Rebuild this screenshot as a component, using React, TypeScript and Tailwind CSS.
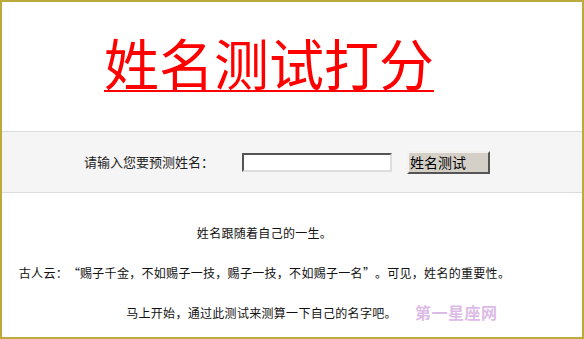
export default function App() {
  return (
    <div
      className="relative flex h-[339px] w-[584px] flex-col border-2 border-[#bcaa3c] bg-white text-[#000]"
      style={{ fontFamily: '"Noto Sans CJK SC", sans-serif' }}
    >
      <div className="flex h-[129px] items-center justify-center pr-[46px] pb-[10px]">
        <a
          href="#"
          className="text-[55px] leading-none text-[#ff0000] underline decoration-2 underline-offset-[5px]"
          style={{ fontFamily: '"Noto Sans CJK SC", serif' }}
        >
          姓名测试打分
        </a>
      </div>

      <div className="flex h-[62px] items-center justify-center border-y border-[#dcdcdc] bg-[#f5f5f5] pr-[10px] text-[13px] text-[#222]">
        <span className="mr-[28px]">请输入您要预测姓名：</span>
        <input
          type="text"
          className="h-[19px] w-[150px] border-2 border-t-[#555] border-l-[#555] border-r-[#ddd] border-b-[#ddd] bg-white outline-none"
        />
        <button className="ml-[15px] flex h-[23px] w-[83px] items-center border-2 border-t-[#f4f2ee] border-l-[#f4f2ee] border-r-[#555] border-b-[#555] bg-[#d4d0c8] pl-[1px] text-[14px] leading-none text-black">
          姓名测试
        </button>
      </div>

      <div className="flex flex-1 flex-col items-center gap-[20px] pt-[30px] pr-[55px] text-[12px] leading-[20px] tracking-[0.3px] text-[#111]">
        <p>姓名跟随着自己的一生。</p>
        <p>
          古人云：<span className="inline-block w-[12px] text-right">“</span>赐子千金，不如赐子一技，赐子一技，不如赐子一名
          <span className="inline-block w-[12px] text-left">”</span>。可见，姓名的重要性。
        </p>
        <p className="pr-[6px]">马上开始，通过此测试来测算一下自己的名字吧。</p>
      </div>

      <span className="absolute left-[413px] top-[302px] text-[16px] font-bold leading-none tracking-[0.5px] text-[#dcbbe6]">
        第一星座网
      </span>
    </div>
  );
}
